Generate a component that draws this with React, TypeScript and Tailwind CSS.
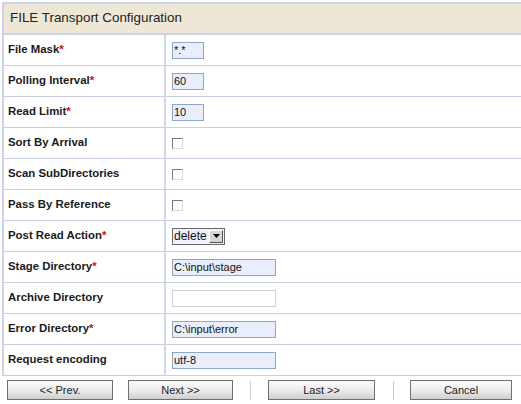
const fields: { label: string; req?: boolean; kind: 'text' | 'check' | 'select'; value?: string; width?: string; disabled?: boolean }[] = [
  { label: 'File Mask', req: true, kind: 'text', value: '*.*', width: 'w-[32px]' },
  { label: 'Polling Interval', req: true, kind: 'text', value: '60', width: 'w-[32px]' },
  { label: 'Read Limit', req: true, kind: 'text', value: '10', width: 'w-[32px]' },
  { label: 'Sort By Arrival', kind: 'check' },
  { label: 'Scan SubDirectories', kind: 'check' },
  { label: 'Pass By Reference', kind: 'check' },
  { label: 'Post Read Action', req: true, kind: 'select', value: 'delete' },
  { label: 'Stage Directory', req: true, kind: 'text', value: 'C:\\input\\stage', width: 'w-[104px]' },
  { label: 'Archive Directory', kind: 'text', value: '', width: 'w-[104px]', disabled: true },
  { label: 'Error Directory', req: true, kind: 'text', value: 'C:\\input\\error', width: 'w-[104px]' },
  { label: 'Request encoding', kind: 'text', value: 'utf-8', width: 'w-[104px]' },
];

function Field({ f }: { f: (typeof fields)[number] }) {
  if (f.kind === 'check') {
    return (
      <div className="w-[11px] h-[11px] border border-t-[#7a7a7a] border-l-[#7a7a7a] border-r-[#dcdcdc] border-b-[#dcdcdc] bg-white" />
    );
  }
  if (f.kind === 'select') {
    return (
      <div className="flex items-center h-[17px] w-[53px] border border-[#6a6a6a] bg-[#eef2fb]">
        <span className="flex-1 pl-[1px] text-[12px] leading-none text-[#111]">{f.value}</span>
        <div className="flex items-center justify-center w-[14px] h-[13px] mr-[1px] bg-[#d6d6d6] border border-t-white border-l-white border-r-[#555] border-b-[#555]">
          <svg width="7" height="4" viewBox="0 0 7 4">
            <path d="M0 0h7L3.5 4z" fill="#000" />
          </svg>
        </div>
      </div>
    );
  }
  return (
    <div
      className={`flex items-center h-[17px] ${f.width} border pl-[1px] text-[11px] leading-none text-[#111] ${
        f.disabled ? 'border-[#cfcfcf] bg-white' : 'border-[#8fa6c8] bg-[#e8eefb]'
      }`}
    >
      {f.value}
    </div>
  );
}

function Btn({ label, w }: { label: string; w: string }) {
  return (
    <div
      className={`${w} h-[20px] flex items-center justify-center border border-[#6f6f6f] bg-gradient-to-b from-[#fbfbfb] via-[#ececec] to-[#cfcfcf] text-[11px] text-[#222]`}
    >
      {label}
    </div>
  );
}

export default function App() {
  return (
    <div className="w-[521px] h-[404px] bg-white pt-[2px] pl-[2px] overflow-hidden" style={{ fontFamily: '"Liberation Sans", Arial, sans-serif' }}>
      <div className="border-l-2 border-[#cdd1ea]">
        <div className="h-[33px] flex items-center pl-[6px] border-t-2 border-b-2 border-t-[#cdd1ea] border-b-[#cdd1ea] bg-[#efe7d5] text-[13.4px] text-[#222]">
          FILE Transport Configuration
        </div>
        {fields.map((f) => (
          <div key={f.label} className="grid grid-cols-[162px_1fr] h-[31px] border-b border-[#c9cee2]">
            <div className="flex items-center pl-[4px] border-r-2 border-[#d3d6e6] text-[11.4px] font-bold text-[#1a1a1a]">
              {f.label}
              {f.req && <span className="text-[#e00000]">*</span>}
            </div>
            <div className="flex items-center pl-[6px]">
              <Field f={f} />
            </div>
          </div>
        ))}
      </div>
      <div className="flex items-center mt-[4px] pl-[5px]">
        <Btn label="<< Prev." w="w-[106px]" />
        <div className="ml-[15px]">
          <Btn label="Next >>" w="w-[105px]" />
        </div>
        <div className="ml-[17px] w-px h-[19px] bg-[#c8cbd8]" />
        <div className="ml-[17px]">
          <Btn label="Last >>" w="w-[107px]" />
        </div>
        <div className="ml-[18px] w-px h-[19px] bg-[#c8cbd8]" />
        <div className="ml-[16px]">
          <Btn label="Cancel" w="w-[102px]" />
        </div>
      </div>
    </div>
  );
}
